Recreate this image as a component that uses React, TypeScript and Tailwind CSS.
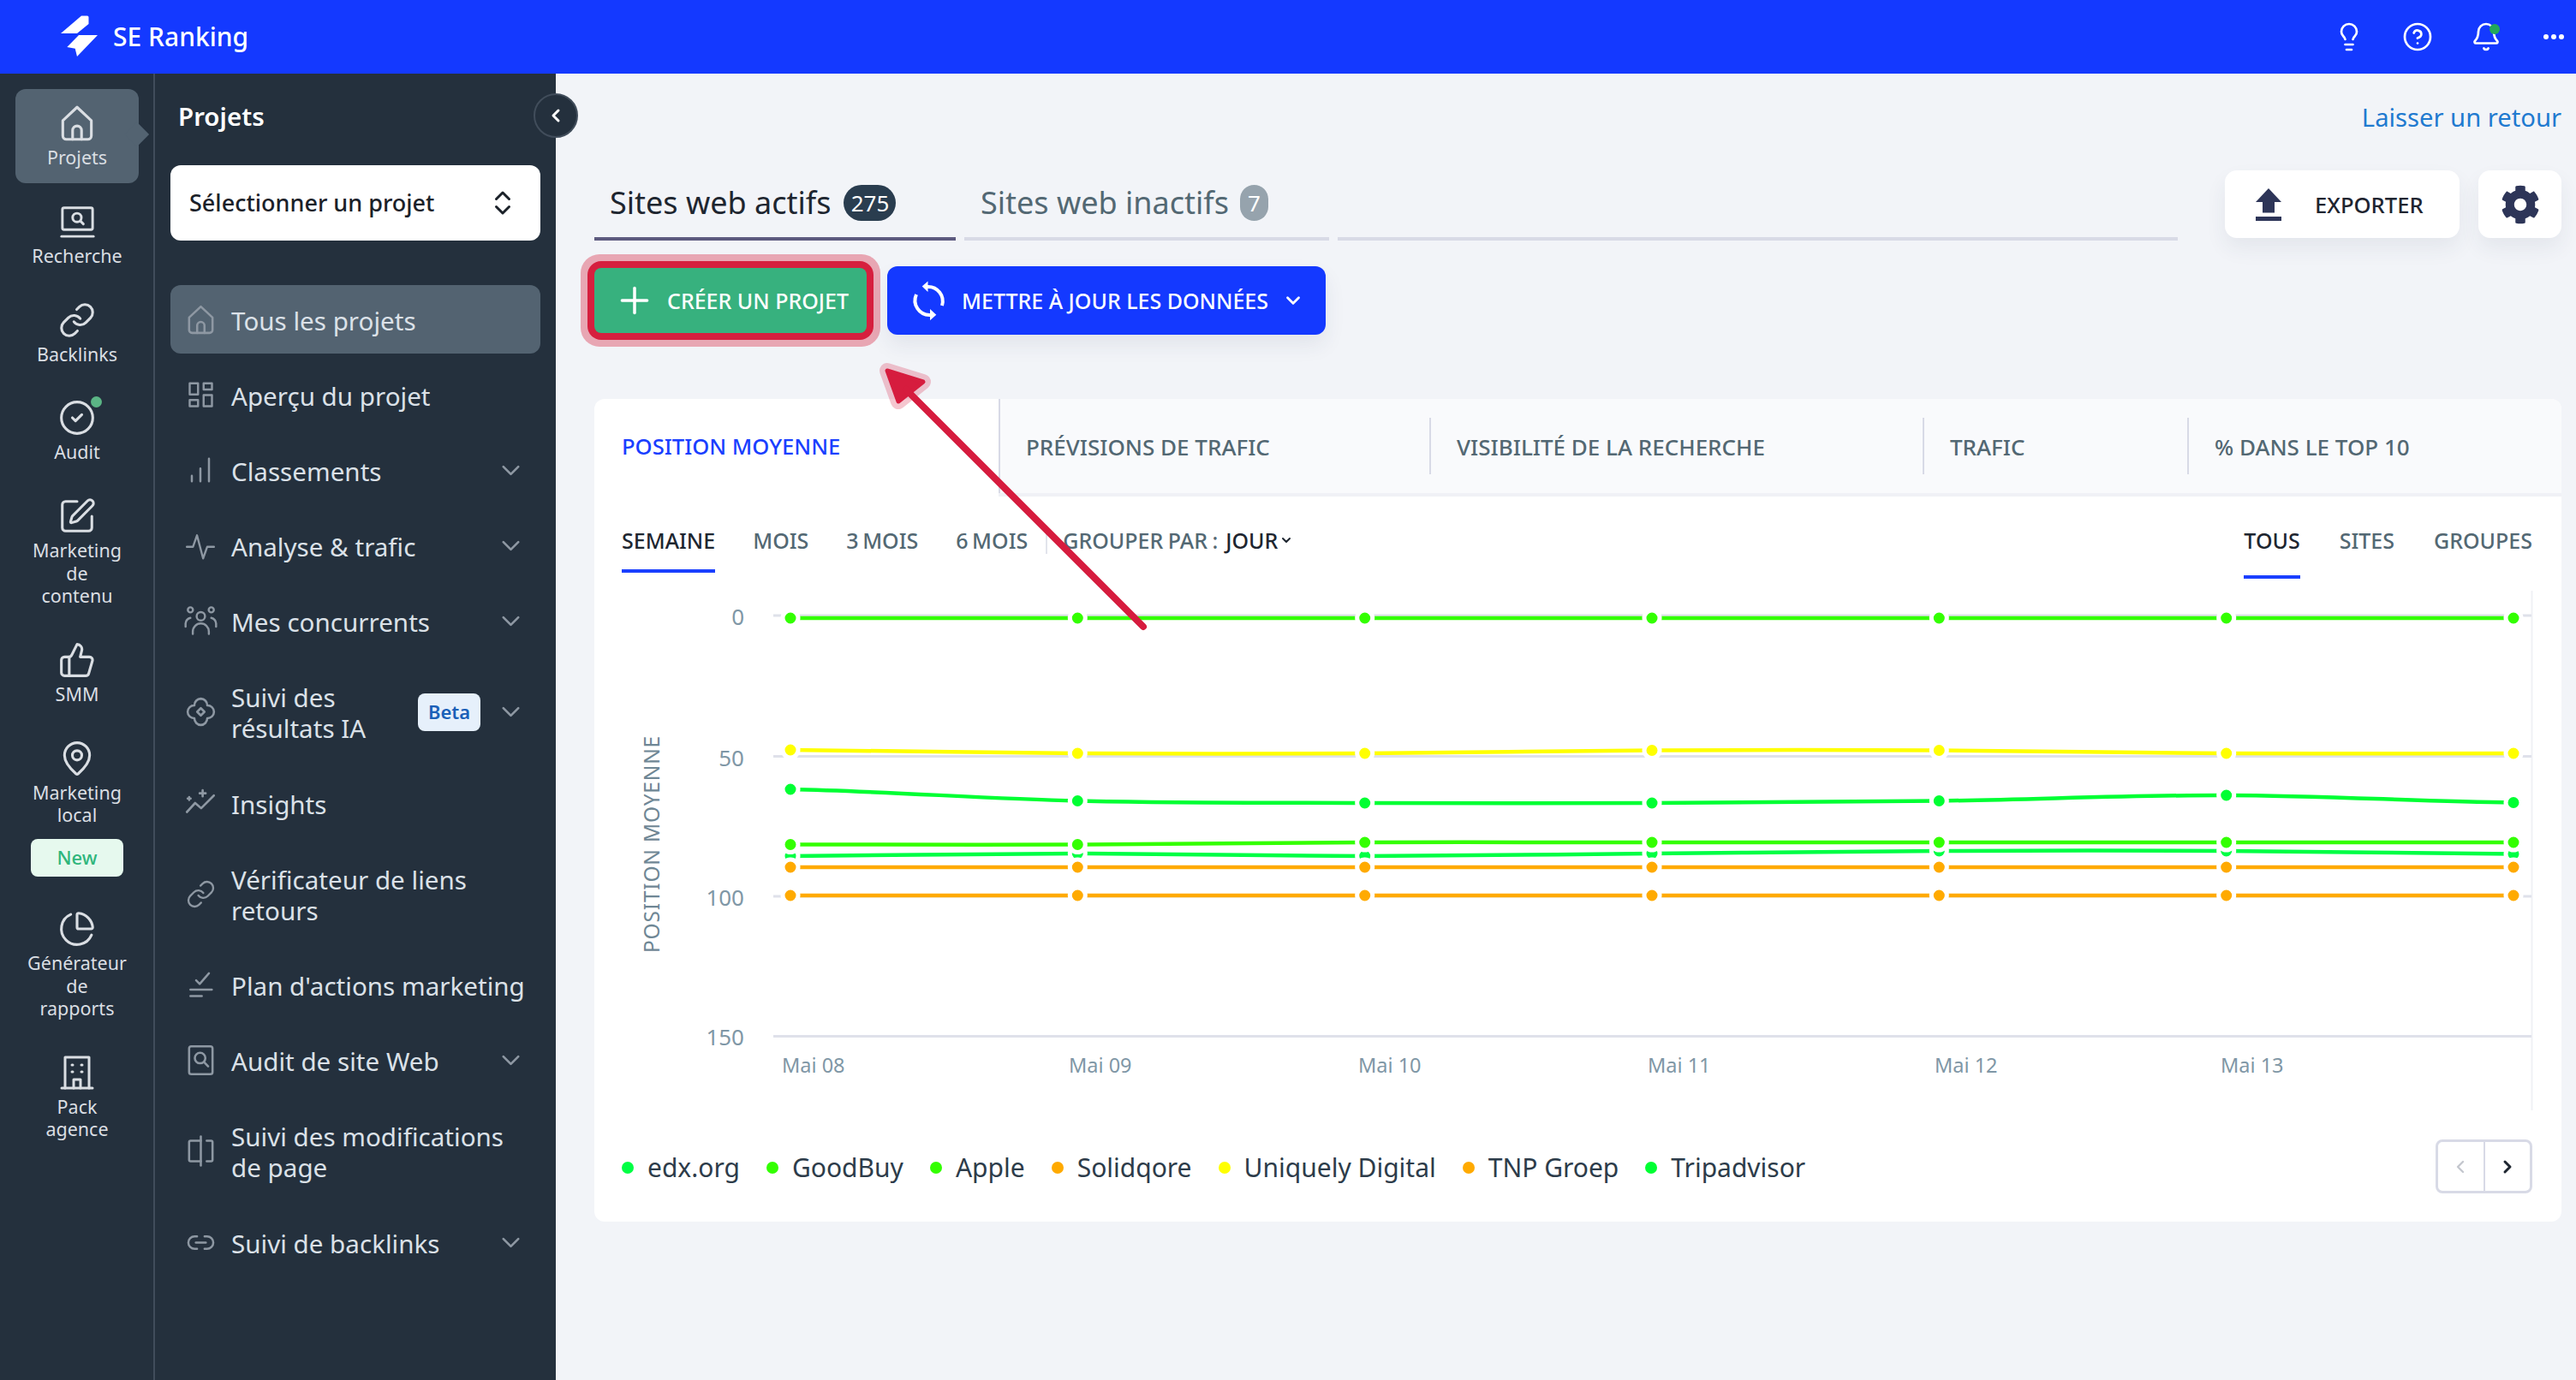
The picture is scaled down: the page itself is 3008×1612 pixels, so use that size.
import React from 'react';
import {
  Bell,
  ChartPie,
  ChevronDown,
  ChevronLeft,
  ChevronRight,
  ChevronsUpDown,
  CircleCheck,
  CircleHelp,
  Lightbulb,
  Link,
  Link2,
  MapPin,
  Plus,
  SquarePen,
  ThumbsUp,
} from 'lucide-react';
import { FaCog } from 'react-icons/fa';

const Svg: React.FC<{ size: number; sw?: number; children: React.ReactNode }> = ({ size, sw = 1.5, children }) => (
  <svg className="shrink-0" width={size} height={size} viewBox="0 0 24 24" fill="none" stroke="currentColor" strokeWidth={sw} strokeLinecap="round" strokeLinejoin="round">
    {children}
  </svg>
);

const HomeIcon = ({ size = 50 }: { size?: number }) => (
  <Svg size={size}>
    <path d="M4 10.5 12 3l8 7.5V19a2 2 0 0 1-2 2H6a2 2 0 0 1-2-2z" />
    <path d="M9.5 21v-5a2.5 2.5 0 0 1 5 0v5" />
  </Svg>
);

const LaptopSearchIcon = () => (
  <Svg size={47}>
    <rect x="3" y="4" width="18" height="13" rx="1" />
    <path d="M2.5 21h19" />
    <circle cx="11.7" cy="9.8" r="2.6" />
    <path d="m13.7 11.8 1.8 1.8" />
  </Svg>
);

const BuildingIcon = () => (
  <Svg size={48}>
    <path d="M5 21V3h14v18" />
    <path d="M3 21h18" />
    <path d="M9 7.5h.5M14.5 7.5h.5M9 11.5h.5M14.5 11.5h.5" />
    <path d="M10 21v-5h4v5" />
  </Svg>
);

const navIcons: Record<string, React.ReactNode> = {
  home: <HomeIcon size={41} />,
  grid: (
    <Svg size={39}>
      <rect x="4" y="3.5" width="6" height="8" />
      <rect x="14" y="3.5" width="6" height="4.5" />
      <rect x="4" y="15.5" width="6" height="4.5" />
      <rect x="14" y="12" width="6" height="8" />
    </Svg>
  ),
  bars: (
    <Svg size={40}>
      <path d="M6 20v-4M12 20v-9M18 20V4" />
    </Svg>
  ),
  pulse: (
    <Svg size={38}>
      <path d="M2 12.5h4.5L9.5 4l4.5 17 3-8.5H22" />
    </Svg>
  ),
  people: (
    <Svg size={45} sw={1.3}>
      <circle cx="12" cy="9" r="2.6" />
      <circle cx="5.5" cy="5" r="1.6" />
      <circle cx="18.5" cy="5" r="1.6" />
      <path d="M7 20v-1.5a5 5 0 0 1 10 0V20" />
      <path d="M2.5 15.5v-2a4 4 0 0 1 3-3.5M21.5 15.5v-2a4 4 0 0 0-3-3.5" />
    </Svg>
  ),
  clover: (
    <Svg size={41}>
      <path d="M12 3a4.5 4.5 0 0 1 4.4 4.6A4.4 4.4 0 0 1 21 12a4.4 4.4 0 0 1-4.6 4.4A4.5 4.5 0 0 1 12 21a4.5 4.5 0 0 1-4.4-4.6A4.4 4.4 0 0 1 3 12a4.4 4.4 0 0 1 4.6-4.4A4.5 4.5 0 0 1 12 3z" />
      <path d="m12 9.5 2.5 2.5-2.5 2.5L9.5 12z" />
    </Svg>
  ),
  spark: (
    <Svg size={42}>
      <path d="m3 18 5.5-6 4 3.5L21 7" />
      <path d="M13.5 3.5v4M11.5 5.5h4M4.5 8v2M3.5 9h2" />
    </Svg>
  ),
  link: <Link size={35} strokeWidth={1.6} className="shrink-0" />,
  checks: (
    <Svg size={40}>
      <path d="m9 8.5 2.5 2.5L18 3.5" />
      <path d="M5 15h15M5 19.5h8" />
    </Svg>
  ),
  doc: (
    <Svg size={41}>
      <rect x="4" y="2.5" width="16" height="19" rx="1.5" />
      <circle cx="11.5" cy="10.5" r="3.6" />
      <path d="m14.2 13.2 2.8 3" />
    </Svg>
  ),
  split: (
    <Svg size={41}>
      <path d="M12 2v20" />
      <path d="M12 5H5a1 1 0 0 0-1 1v12a1 1 0 0 0 1 1h7" />
      <path d="M16 5h3a1 1 0 0 1 1 1v12a1 1 0 0 1-1 1h-3" />
    </Svg>
  ),
  chain: <Link2 size={35} strokeWidth={1.7} className="shrink-0" />,
};

const railItems = [
  { lines: ['Projets'], icon: <HomeIcon />, active: true },
  { lines: ['Recherche'], icon: <LaptopSearchIcon /> },
  { lines: ['Backlinks'], icon: <Link size={44} strokeWidth={1.7} className="shrink-0" /> },
  { lines: ['Audit'], icon: <CircleCheck size={44} strokeWidth={1.7} className="shrink-0" />, dot: true },
  { lines: ['Marketing', 'de', 'contenu'], icon: <SquarePen size={46} strokeWidth={1.6} className="shrink-0" /> },
  { lines: ['SMM'], icon: <ThumbsUp size={44} strokeWidth={1.7} className="shrink-0" /> },
  { lines: ['Marketing', 'local'], icon: <MapPin size={44} strokeWidth={1.7} className="shrink-0" />, badge: 'New' },
  { lines: ['Générateur', 'de', 'rapports'], icon: <ChartPie size={44} strokeWidth={1.7} className="shrink-0" /> },
  { lines: ['Pack', 'agence'], icon: <BuildingIcon /> },
];

const navItems = [
  { icon: 'home', lines: ['Tous les projets'], active: true },
  { icon: 'grid', lines: ['Aperçu du projet'] },
  { icon: 'bars', lines: ['Classements'], more: true },
  { icon: 'pulse', lines: ['Analyse & trafic'], more: true },
  { icon: 'people', lines: ['Mes concurrents'], more: true },
  { icon: 'clover', lines: ['Suivi des', 'résultats IA'], more: true, beta: true },
  { icon: 'spark', lines: ['Insights'] },
  { icon: 'link', lines: ['Vérificateur de liens', 'retours'] },
  { icon: 'checks', lines: ["Plan d'actions marketing"] },
  { icon: 'doc', lines: ['Audit de site Web'], more: true },
  { icon: 'split', lines: ['Suivi des modifications', 'de page'] },
  { icon: 'chain', lines: ['Suivi de backlinks'], more: true },
];

const metricTabs = [
  { label: 'PRÉVISIONS DE TRAFIC', width: 'w-[503px]', first: true },
  { label: 'VISIBILITÉ DE LA RECHERCHE', width: 'w-[576px]' },
  { label: 'TRAFIC', width: 'w-[309px]' },
  { label: '% DANS LE TOP 10', width: 'flex-1' },
];

const xs = [923, 1258.3, 1593.7, 1929, 2264.3, 2599.7, 2935];

const series = [
  { color: '#33ff00', ys: [722, 722, 722, 722, 722, 722, 722] },
  { color: '#ffff00', ys: [876, 880, 880, 876.5, 876.5, 880, 880] },
  { color: '#00ff33', ys: [922, 935.5, 938, 938, 935.5, 929, 937.5] },
  { color: '#00ff44', ys: [1000, 997, 1000, 997, 994, 994, 997.5] },
  { color: '#33ff00', ys: [986.5, 986.5, 984, 984, 984, 984, 984] },
  { color: '#ffaa00', ys: [1013, 1013, 1013, 1013, 1013, 1013, 1013] },
  { color: '#ffaa00', ys: [1046, 1046, 1046, 1046, 1046, 1046, 1046] },
];

// catmull-rom, close enough to the chart's spline
const spline = (ys: number[]) => {
  let d = `M${xs[0]} ${ys[0]}`;
  for (let i = 0; i < ys.length - 1; i++) {
    const prev = ys[Math.max(i - 1, 0)];
    const next = ys[Math.min(i + 2, ys.length - 1)];
    const dx = (xs[i + 1] - xs[i]) / 3;
    d += ` C${xs[i] + dx} ${ys[i] + (ys[i + 1] - prev) / 6} ${xs[i + 1] - dx} ${ys[i + 1] - (next - ys[i]) / 6} ${xs[i + 1]} ${ys[i + 1]}`;
  }
  return d;
};

const legend = [
  { name: 'edx.org', color: 'bg-[#00ff44]' },
  { name: 'GoodBuy', color: 'bg-[#33ff00]' },
  { name: 'Apple', color: 'bg-[#33ff00]' },
  { name: 'Solidqore', color: 'bg-[#ffaa00]' },
  { name: 'Uniquely Digital', color: 'bg-[#ffff00]' },
  { name: 'TNP Groep', color: 'bg-[#ffaa00]' },
  { name: 'Tripadvisor', color: 'bg-[#00ff33]' },
];

const dateLabels = [
  { x: 913, t: 'Mai 08' },
  { x: 1248, t: 'Mai 09' },
  { x: 1586, t: 'Mai 10' },
  { x: 1924, t: 'Mai 11' },
  { x: 2259, t: 'Mai 12' },
  { x: 2593, t: 'Mai 13' },
];

const Chart = () => (
  <svg width={2297} height={610} viewBox="694 690 2297 610" className="block" fontFamily="'Noto Sans', sans-serif">
    <path d="M2956.5 690V1297" stroke="#f0f1f5" strokeWidth={2} />
    {[719, 883.5, 1047, 1210.5].map((y) => (
      <path key={y} d={`M903 ${y}H2956`} stroke="#dfe1ea" strokeWidth={3} />
    ))}
    {[
      { y: 721, t: '0' },
      { y: 886, t: '50' },
      { y: 1049, t: '100' },
      { y: 1212, t: '150' },
    ].map((l) => (
      <text key={l.t} x={869} y={l.y + 9} textAnchor="end" fontSize={26} fill="#7f97a6">
        {l.t}
      </text>
    ))}
    <text transform="translate(770 986) rotate(-90)" textAnchor="middle" fontSize={24.5} letterSpacing={0.8} fill="#6f8795">
      POSITION MOYENNE
    </text>
    {dateLabels.map((l) => (
      <text key={l.t} x={l.x} y={1253} fontSize={23.5} fill="#7f97a6">
        {l.t}
      </text>
    ))}
    {series.map((s, i) => (
      <g key={i}>
        <path d={spline(s.ys)} fill="none" stroke={s.color} strokeWidth={4.5} />
        {s.ys.map((y, j) => (
          <circle key={j} cx={xs[j]} cy={y} r={9} fill={s.color} stroke="#ffffff" strokeWidth={5} />
        ))}
      </g>
    ))}
  </svg>
);

const App: React.FC = () => {
  return (
    <div className="relative flex h-screen w-full flex-col overflow-hidden bg-[#f2f4f8] font-['Noto_Sans',sans-serif]">
      {/* Top bar */}
      <header className="flex h-[86px] shrink-0 items-center justify-between bg-[#1439ff] pl-[70px] pr-[14px] text-white">
        <div className="flex items-center gap-[16px]">
          <svg width={46} height={50} viewBox="70 18 46 50" fill="#ffffff">
            <path d="M95 18.5h7a1.5 1.5 0 0 1 1.5 1.5v8L90 39H71z" />
            <path d="M92 41h22L90 66l-2.3-9.3-9.4-1.7z" />
          </svg>
          <span className="text-[30px] font-medium leading-none">SE Ranking</span>
        </div>
        <div className="flex items-center">
          <div className="flex w-[80px] justify-center"><Lightbulb size={36} strokeWidth={1.8} /></div>
          <div className="flex w-[80px] justify-center"><CircleHelp size={36} strokeWidth={1.8} /></div>
          <div className="relative flex w-[80px] justify-center">
            <Bell size={36} strokeWidth={1.8} />
            <span className="absolute left-[44px] top-[3px] h-[12px] w-[12px] rounded-full bg-[#22a85a]" />
          </div>
          <div className="flex w-[51px] justify-end gap-[3px]">
            <span className="h-[6px] w-[6px] rounded-full bg-white" />
            <span className="h-[6px] w-[6px] rounded-full bg-white" />
            <span className="h-[6px] w-[6px] rounded-full bg-white" />
          </div>
        </div>
      </header>

      <div className="flex min-h-0 flex-1">
        {/* Icon rail */}
        <aside className="flex w-[181px] shrink-0 flex-col gap-[5.3px] border-r-2 border-[#414d5b] bg-[#24303d] pl-[18px] pr-[17px] pt-[18px] text-[#dadee3]">
          {railItems.map((item) => (
            <div
              key={item.lines[0] + item.lines.length}
              className={`relative flex flex-col items-center rounded-[12px] pb-[16px] pt-[20px] ${item.active ? 'bg-[#536371]' : ''}`}
            >
              {item.active && <span className="absolute right-[-8px] top-[43px] h-[20px] w-[20px] rotate-45 bg-[#536371]" />}
              <div className="relative flex h-[40px] w-[40px] items-center justify-center">
                {item.icon}
                {item.dot && <span className="absolute right-[-9px] top-[-5px] h-[13px] w-[13px] rounded-full bg-[#5bb585]" />}
              </div>
              <div className="mt-[7px] flex flex-col items-center text-[21.5px] leading-[26.5px]">
                {item.lines.map((l) => (
                  <span key={l}>{l}</span>
                ))}
              </div>
              {item.badge && (
                <span className="mt-[14px] flex h-[44px] w-[108px] items-center justify-center rounded-[8px] bg-[#e6f9ee] text-[22px] font-medium text-[#2fb67c]">
                  {item.badge}
                </span>
              )}
            </div>
          ))}
        </aside>

        {/* Section menu */}
        <nav className="flex w-[468px] shrink-0 flex-col bg-[#24303d] px-[18px] pt-[32px]">
          <h2 className="pl-[9px] text-[29.5px] font-semibold leading-[36px] text-white">Projets</h2>
          <div className="mt-[39px] flex h-[88px] items-center justify-between rounded-[12px] bg-white pl-[22px] pr-[26px]">
            <span className="text-[27px] font-medium text-[#1b2129]">Sélectionner un projet</span>
            <ChevronsUpDown size={36} strokeWidth={2} className="text-[#1b2129]" />
          </div>
          <div className="mt-[52px] flex flex-col gap-[8.2px]">
            {navItems.map((item) => (
              <div
                key={item.lines[0]}
                className={`flex min-h-[80px] items-center rounded-[12px] py-[20.5px] pl-[19px] pr-[17.5px] text-[#dbe1e8] ${item.active ? 'bg-[#536371]' : ''}`}
              >
                <div className="flex h-[32px] w-[32px] shrink-0 items-center justify-center text-[#8e98a3]">{navIcons[item.icon]}</div>
                <div className="ml-[20px] flex flex-1 flex-col pt-[3px] text-[29.6px] leading-[36px]">
                  {item.lines.map((l) => (
                    <span key={l} className="whitespace-nowrap">{l}</span>
                  ))}
                </div>
                {item.beta && (
                  <span className="mr-[17.5px] flex h-[44px] w-[73px] items-center justify-center rounded-[8px] bg-[#e6f0fb] text-[22px] font-semibold text-[#1a60b8]">
                    Beta
                  </span>
                )}
                {item.more && <ChevronDown size={35} strokeWidth={1.8} className="text-[#8e98a3]" />}
              </div>
            ))}
          </div>
        </nav>

        {/* Main */}
        <main className="relative flex min-w-0 flex-1 flex-col pl-[45px] pr-[17px] pt-[32px]">
          <button className="absolute left-[-26px] top-[23px] flex h-[52px] w-[52px] items-center justify-center rounded-full border-2 border-[#414d5b] bg-[#24303d] text-white">
            <ChevronLeft size={24} strokeWidth={3} />
          </button>

          <div className="flex h-[40px] items-center justify-end text-[29.2px] text-[#1f7ad0]">Laisser un retour</div>

          <div className="mt-[41px] flex h-[82px] gap-[55px]">
            <div className="flex flex-1 gap-[10px]">
              <div className="flex w-[422px] items-center gap-[15px] border-b-4 border-[#5d5a7f] pb-[2px] pl-[18px] text-[36px] text-[#1e2630]">
                Sites web actifs
                <span className="flex h-[42px] w-[61px] items-center justify-center rounded-full bg-[#2a3d4f] text-[26px] text-white">275</span>
              </div>
              <div className="flex w-[426px] items-center gap-[13px] border-b-4 border-[#d8dae6] pb-[2px] pl-[19px] text-[36px] text-[#536873]">
                Sites web inactifs
                <span className="flex h-[42px] w-[33px] items-center justify-center rounded-full bg-[#96a3ad] text-[26px] text-white">7</span>
              </div>
              <div className="flex-1 border-b-4 border-[#d8dae6]" />
            </div>
            <div className="flex h-[79px] gap-[22px]">
              <button className="flex w-[274px] items-center rounded-[14px] bg-white pl-[36px] shadow-[0_12px_24px_rgba(40,50,90,0.07)]">
                <svg width={30} height={38} viewBox="0 0 30 38" fill="#2d3558">
                  <path d="M15 0 30 16H22V28.5H8V16H0z" />
                  <path d="M0 33h30v5H0z" />
                </svg>
                <span className="ml-[39px] pt-[3px] text-[25.6px] font-medium text-[#1f2530]">EXPORTER</span>
              </button>
              <button className="flex w-[97px] items-center justify-center rounded-[14px] bg-white text-[#2d3558] shadow-[0_12px_24px_rgba(40,50,90,0.07)]">
                <FaCog size={46} />
              </button>
            </div>
          </div>

          {/* Actions */}
          <div className="mt-[30px] flex h-[80px] items-center gap-[24px]">
            <button className="flex h-[76px] w-[318px] items-center rounded-[8px] bg-[#37b17e] pl-[22px] text-white shadow-[0_0_0_8px_#d61f3e,0_0_0_16px_#e8a6b3]">
              <Plus size={50} strokeWidth={1.7} />
              <span className="ml-[13px] pt-[2px] text-[25px] font-medium">CRÉER UN PROJET</span>
            </button>
            <button className="flex h-[80px] w-[512px] items-center rounded-[12px] bg-[#1439ff] pl-[14px] text-white shadow-[0_12px_24px_rgba(40,50,90,0.08)]">
              <svg width={70} height={70} viewBox="0 0 70 70" fill="none" stroke="#ffffff" strokeWidth={4}>
                <path d="M33 19A17 17 0 0 1 50 41" />
                <path d="M36 52A17 17 0 0 1 20 28" />
                <path d="M26.7 18.5 33.5 12.5V25z" fill="#ffffff" stroke="none" />
                <path d="M43.3 51.7 36 45V58.3z" fill="#ffffff" stroke="none" />
              </svg>
              <span className="ml-[3px] whitespace-nowrap pt-[2px] text-[25px] font-medium">METTRE À JOUR LES DONNÉES</span>
              <ChevronDown size={26} strokeWidth={2.6} className="ml-[16px]" />
            </button>
          </div>

          {/* Chart card */}
          <section className="mt-[75px] flex h-[961px] flex-col overflow-hidden rounded-[12px] bg-white">
            <div className="flex h-[114px] shrink-0">
              <div className="flex w-[472px] items-center pb-[2px] pl-[32px] text-[25.6px] font-medium text-[#1a3fff]">POSITION MOYENNE</div>
              <div className="flex flex-1 border-b-4 border-[#f0f1f6] bg-[#f9fafc]">
                {metricTabs.map((tab) => (
                  <div key={tab.label} className={`relative flex items-center pl-[32px] pt-[2px] text-[26px] font-medium text-[#536873] ${tab.width}`}>
                    <span className={`absolute left-0 w-[2px] bg-[#d8dae6] ${tab.first ? 'inset-y-0' : 'top-[22px] h-[66px]'}`} />
                    {tab.label}
                  </div>
                ))}
              </div>
            </div>

            <div className="flex h-[110px] shrink-0 items-start justify-between pl-[32px] pr-[34px] pt-[33px] text-[25px] font-medium leading-[36px] text-[#536873]">
              <div className="flex items-start gap-[44px]">
                <span className="border-b-4 border-[#1a3fff] pb-[16px] text-[#1e2630]">SEMAINE</span>
                <span>MOIS</span>
                <span className="[word-spacing:-2px]">3 MOIS</span>
                <span className="relative [word-spacing:-2px]">
                  6 MOIS
                  <span className="absolute right-[-23px] top-[7px] h-[27px] w-[2px] bg-[#e2e4ec]" />
                </span>
                <span className="-ml-[3px] flex items-center [word-spacing:-1px]">
                  GROUPER PAR :<span className="ml-[9px] text-[#1e2630]">JOUR</span>
                  <ChevronDown size={16} strokeWidth={3} className="ml-[2px] text-[#1e2630]" />
                </span>
              </div>
              <div className="flex items-start gap-[46px]">
                <span className="border-b-4 border-[#1a3fff] pb-[23px] text-[#1e2630]">TOUS</span>
                <span>SITES</span>
                <span>GROUPES</span>
              </div>
            </div>

            <Chart />

            <div className="mt-[31px] flex items-start justify-between pl-[32px] pr-[34px]">
              <div className="flex items-center gap-[31px] pt-[15px]">
                {legend.map((l) => (
                  <div key={l.name} className="flex items-center gap-[16px] text-[30px] leading-[36px] text-[#2d3c4a]">
                    <span className={`h-[14px] w-[14px] rounded-full ${l.color}`} />
                    {l.name}
                  </div>
                ))}
              </div>
              <div className="flex h-[63px] w-[113px] rounded-[8px] border-[3px] border-[#d8dae6]">
                <div className="flex flex-1 items-center justify-center border-r-2 border-[#d8dae6] text-[#c4c7ce]"><ChevronLeft size={24} strokeWidth={2.4} /></div>
                <div className="flex flex-1 items-center justify-center text-[#1e2630]"><ChevronRight size={24} strokeWidth={3} /></div>
              </div>
            </div>
          </section>
        </main>
      </div>

      {/* Annotation arrow */}
      <svg className="pointer-events-none absolute left-0 top-0" width={3008} height={1612} viewBox="0 0 3008 1612">
        <path d="M1036 433 1049 469 1078 446z" fill="#d61c3e" fillOpacity={0.25} stroke="#d61c3e" strokeOpacity={0.25} strokeWidth={18} strokeLinejoin="round" />
        <path d="M1036 433 1049 469 1078 446z" fill="#d61c3e" stroke="#d61c3e" strokeWidth={5} strokeLinejoin="round" />
        <path d="M1058 455 1335 732" stroke="#d61c3e" strokeWidth={8} strokeLinecap="round" />
      </svg>
    </div>
  );
};

export default App;
